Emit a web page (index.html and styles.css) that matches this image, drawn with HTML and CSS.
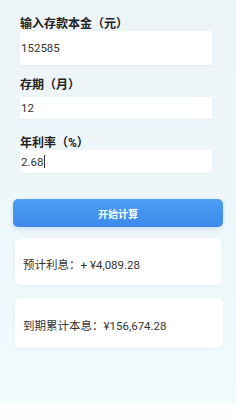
FILE: index.html
```html
<!DOCTYPE html>
<html lang="zh">
<head>
<meta charset="utf-8">
<link rel="stylesheet" href="styles.css">
</head>
<body>
<div class="page">
  <div class="field">
    <div class="label label-first">输入存款本金（元）</div>
    <div class="input input-tall">152585</div>
  </div>
  <div class="field">
    <div class="label label-second">存期（月）</div>
    <div class="input">12</div>
  </div>
  <div class="field">
    <div class="label label-third">年利率（%）</div>
    <div class="input input-tight">2.68<span class="caret"></span></div>
  </div>
  <button class="btn">开始计算</button>
  <div class="card card-one">预计利息：+ ¥4,089.28</div>
  <div class="card card-two">到期累计本息：¥156,674.28</div>
</div>
<div class="footer"></div>
</body>
</html>
```
FILE: styles.css
```css
html, body {
  margin: 0;
  padding: 0;
}
body {
  width: 236px;
  height: 420px;
  overflow: hidden;
  font-family: Roboto, "Noto Sans CJK SC", sans-serif;
  color: #333;
  background: linear-gradient(180deg, #edf4f8 0%, #eef7fa 50%, #effbfd 100%);
  display: flex;
  flex-direction: column;
}
.page {
  flex: 1;
  padding: 17px 13px 0 13px;
  display: flex;
  flex-direction: column;
}
.field {
  margin: 0 11px 0 7px;
  display: flex;
  flex-direction: column;
}
.label {
  font-size: 12px;
  line-height: 14px;
  font-weight: 700;
  color: #222;
}
.label-second { margin-top: 13px; margin-bottom: 5px; }
.label-third { margin-top: 17px; }
.input {
  background: #ffffff;
  height: 22px;
  display: flex;
  align-items: center;
  font-size: 11.5px;
  color: #333;
  padding-left: 1px;
  box-shadow: 0 1px 2px rgba(160, 185, 200, 0.12);
}
.input-tall { height: 34px; }
.input-tight { height: 23px; }
.caret {
  display: inline-block;
  width: 1px;
  height: 13px;
  background: #333;
  margin-left: 1px;
}
.btn {
  margin-top: 26px;
  height: 28px;
  border: none;
  border-radius: 5px;
  background: linear-gradient(180deg, #4da0f4 0%, #3c88ea 100%);
  color: #fff;
  font-family: Roboto, "Noto Sans CJK SC", sans-serif;
  font-size: 10px;
  font-weight: 700;
  box-shadow: 0 2px 4px rgba(60, 130, 220, 0.2);
  padding: 0;
}
.card {
  background: #fff;
  border-radius: 6px;
  font-size: 11.5px;
  color: #333;
  padding-left: 8px;
  display: flex;
  align-items: center;
  box-shadow: 0 1px 3px rgba(160, 190, 205, 0.15);
}
.card-one {
  margin: 11px 1px 0 2px;
  height: 47px;
  padding-top: 4px;
  box-sizing: border-box;
}
.card-two {
  margin: 13px 0 0 2px;
  height: 50px;
  padding-top: 3px;
  box-sizing: border-box;
}
.footer {
  height: 17px;
  background: #fdfefe;
}
```
